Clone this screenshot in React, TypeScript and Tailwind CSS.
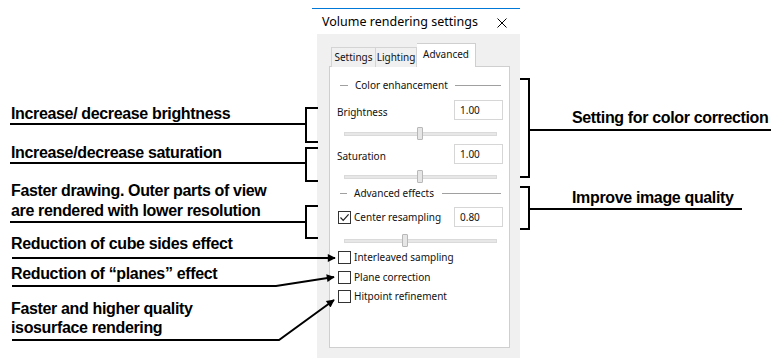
import React from 'react';

// Small dialog pieces
function SectionHeader({ label, dash, gap }: { label: string; dash: number; gap: number }) {
  return (
    <div className="flex items-center h-[14px] pl-[10px] pr-[8px]">
      <div className="h-px bg-[#a0a0a0]" style={{ width: dash }} />
      <span className="ml-[7px] text-[10px] leading-[14px] text-[#111]">{label}</span>
      <div className="flex-1 h-px bg-[#a0a0a0]" style={{ marginLeft: gap }} />
    </div>
  );
}

function ValueBox({ value }: { value: string }) {
  return (
    <div className="ml-auto w-[49px] h-[20px] border border-[#d6d6d6] bg-white flex items-center pl-[5px] text-[10px] text-[#111]">
      {value}
    </div>
  );
}

function ValueRow({ label, value }: { label: string; value: string }) {
  return (
    <div className="flex items-center h-[20px] pl-[7px] pr-[6px]">
      <span className="mt-[4px] text-[10px] text-[#111]">{label}</span>
      <ValueBox value={value} />
    </div>
  );
}

function Slider({ pos, height, pad }: { pos: number; height: number; pad: number }) {
  return (
    <div className="pl-[14px] pr-[12px]" style={{ height, paddingTop: pad }}>
      <div className="relative h-[4px] bg-[#e7e7e7] border border-[#dadada]">
        <div
          className="absolute top-[-6px] w-[6px] h-[13px] bg-[#e6e6e6] border border-[#b8b8b8] rounded-[1px]"
          style={{ left: `${pos}%` }}
        />
      </div>
    </div>
  );
}

function Box({ checked }: { checked?: boolean }) {
  return (
    <div className="w-[13px] h-[13px] border border-[#333] bg-white flex items-center justify-center shrink-0">
      {checked && (
        <svg width="11" height="11" viewBox="0 0 11 11">
          <path d="M1.5 5.5 L4.2 8.3 L9.6 2.3" fill="none" stroke="#222" strokeWidth="1.2" />
        </svg>
      )}
    </div>
  );
}

function CheckRow({ label }: { label: string }) {
  return (
    <div className="flex items-center h-[19.5px] pl-[8px]">
      <Box />
      <span className="ml-[3px] text-[10px] text-[#111]">{label}</span>
    </div>
  );
}

// Annotation text
function Note({ x, y, children }: { x: number; y: number; children: React.ReactNode }) {
  return (
    <div
      className="absolute font-['Liberation_Sans',Arial,sans-serif] font-bold text-[16px] leading-[20px] tracking-[-0.35px] text-black whitespace-nowrap"
      style={{ left: x, top: y }}
    >
      {children}
    </div>
  );
}

export default function App() {
  return (
    <div className="relative w-[771px] h-[358px] bg-white overflow-hidden font-['Noto_Sans',sans-serif]">
      {/* Dialog */}
      <div className="ml-[312px] pt-[8px] w-[208px]">
        <div className="border-t border-[#0078d7] h-[26px] flex items-center pl-[10px] pr-[13px] pt-[2px] bg-white">
          <span className="text-[12.5px] text-black">Volume rendering settings</span>
          <svg className="ml-auto" width="10" height="10" viewBox="0 0 10 10">
            <path d="M0.5 0.5 L9.5 9.5 M9.5 0.5 L0.5 9.5" stroke="#000" strokeWidth="1" />
          </svg>
        </div>

        <div className="ml-[5px] w-[203px] h-[324px] bg-[#f0f0f0] pt-[9px] pl-[12px]">
          {/* Tabs */}
          <div className="flex items-end h-[24px] ml-[2px] -mb-px relative z-10">
            <div className="w-[45px] h-[20px] border border-b-0 border-[#d4d4d4] bg-[#f0f0f0] pt-[2px] text-center text-[10px] leading-[14px] text-[#111]">
              Settings
            </div>
            <div className="w-[41px] h-[20px] border border-l-0 border-b-0 border-[#d4d4d4] bg-[#f0f0f0] pt-[2px] text-center text-[10px] leading-[14px] text-[#111]">
              Lighting
            </div>
            <div className="w-[59px] h-[24px] border border-l-0 border-b-0 border-[#cfcfcf] bg-white pt-[3px] text-center text-[10px] leading-[14px] text-[#111]">
              Advanced
            </div>
          </div>

          {/* Panel */}
          <div className="w-[181px] h-[282px] border border-[#cfcfcf] bg-white pt-[11px]">
            <SectionHeader label="Color enhancement" dash={8} gap={7} />
            <div className="mt-[8px]">
              <ValueRow label="Brightness" value="1.00" />
            </div>
            <Slider pos={48} height={24} pad={12} />
            <ValueRow label="Saturation" value="1.00" />
            <Slider pos={48} height={22} pad={11} />
            <SectionHeader label="Advanced effects" dash={7} gap={8} />
            <div className="mt-[7px] flex items-center h-[20px] pl-[8px] pr-[6px]">
              <Box checked />
              <span className="ml-[3px] text-[10px] text-[#111]">Center resampling</span>
              <ValueBox value="0.80" />
            </div>
            <Slider pos={38} height={21} pad={12} />
            <CheckRow label="Interleaved sampling" />
            <CheckRow label="Plane correction" />
            <CheckRow label="Hitpoint refinement" />
          </div>
        </div>
      </div>

      {/* Annotation lines */}
      <svg className="absolute inset-0 pointer-events-none" width="771" height="358" viewBox="0 0 771 358">
        <defs>
          <marker id="ah" viewBox="0 0 10 10" refX="9" refY="5" markerWidth="5" markerHeight="4" orient="auto" markerUnits="strokeWidth">
            <path d="M0 0 L10 5 L0 10 z" fill="#000" />
          </marker>
        </defs>
        <g fill="none" stroke="#000" strokeWidth="2">
          <path d="M10 124 H306" />
          <path d="M318 108 H306 V142 H318" />
          <path d="M10 163 H306" />
          <path d="M318 148 H306 V181 H318" />
          <path d="M10 222 H306" />
          <path d="M318 206 H306 V238 H318" />
          <path d="M12 258 H335" markerEnd="url(#ah)" />
          <path d="M12 286 H276 L334 277" markerEnd="url(#ah)" />
          <path d="M12 340 H279 L334 300" markerEnd="url(#ah)" />
          <path d="M520 79 H529 V177 H520" />
          <path d="M529 130 H771" />
          <path d="M520 187 H529 V229 H520" />
          <path d="M529 209 H742" />
        </g>
      </svg>

      {/* Annotation texts */}
      <Note x={11} y={104}>Increase/ decrease brightness</Note>
      <Note x={11} y={143}>Increase/decrease saturation</Note>
      <Note x={11} y={181}>
        Faster drawing. Outer parts of view
        <br />
        are rendered with lower resolution
      </Note>
      <Note x={11} y={234}>Reduction of cube sides effect</Note>
      <Note x={11} y={264}>Reduction of “planes” effect</Note>
      <Note x={11} y={299}>
        Faster and higher quality
        <br />
        <span className="block -mt-px">isosurface rendering</span>
      </Note>
      <Note x={572} y={108}>Setting for color correction</Note>
      <Note x={572} y={188}>Improve image quality</Note>
    </div>
  );
}
